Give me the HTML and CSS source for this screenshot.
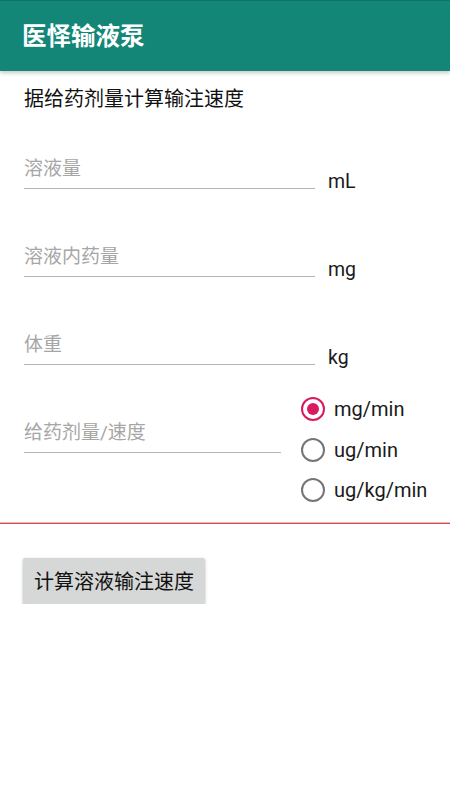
FILE: index.html
```html
<!DOCTYPE html>
<html lang="zh">
<head>
<meta charset="utf-8">
<title>医怿输液泵</title>
<link rel="stylesheet" href="styles.css">
</head>
<body>
<header class="appbar"><h1 class="title">医怿输液泵</h1></header>
<main class="content">
  <p class="subtitle">据给药剂量计算输注速度</p>
  <div class="row">
    <div class="field"><span class="hint">溶液量</span></div>
    <span class="unit">mL</span>
  </div>
  <div class="row">
    <div class="field"><span class="hint">溶液内药量</span></div>
    <span class="unit">mg</span>
  </div>
  <div class="row">
    <div class="field"><span class="hint">体重</span></div>
    <span class="unit">kg</span>
  </div>
  <div class="row row-dose">
    <div class="field field-dose"><span class="hint">给药剂量/速度</span></div>
    <div class="radios">
      <div class="radio-item"><span class="radio checked"></span><span class="radio-label">mg/min</span></div>
      <div class="radio-item"><span class="radio"></span><span class="radio-label">ug/min</span></div>
      <div class="radio-item"><span class="radio"></span><span class="radio-label">ug/kg/min</span></div>
    </div>
  </div>
  <div class="divider"></div>
  <button class="btn" type="button">计算溶液输注速度</button>
</main>
</body>
</html>
```
FILE: styles.css
```css
html, body {
  margin: 0;
  padding: 0;
  background: #ffffff;
}
body {
  font-family: Roboto, "Noto Sans CJK SC", sans-serif;
  color: #111;
  width: 450px;
}
.appbar {
  height: 71px;
  background: #138677;
  border-top: 1px solid #0f7568;
  box-sizing: border-box;
  box-shadow: 0 2px 4px rgba(0, 0, 0, 0.22);
  display: flex;
  align-items: center;
  padding-left: 22px;
  position: relative;
  z-index: 1;
}
.title {
  margin: 0;
  font-size: 24.5px;
  font-weight: bold;
  color: #ffffff;
  line-height: 30px;
  padding-top: 2px;
}
.content {
  padding: 0 0 0 24px;
}
.subtitle {
  margin: 16px 0 0 0;
  font-size: 20px;
  line-height: 24px;
  color: #111;
}
.row {
  display: flex;
  align-items: flex-start;
  margin-top: 56px;
}
.subtitle + .row {
  margin-top: 46px;
}
.field {
  flex: 0 0 291px;
  border-bottom: 1px solid #b4b4b4;
  padding-bottom: 7px;
}
.hint {
  display: block;
  font-size: 19px;
  line-height: 24px;
  color: #a6a6a6;
}
.unit {
  margin-left: 13px;
  margin-top: 13px;
  margin-bottom: -6px;
  font-size: 19.5px;
  line-height: 24px;
  color: #1a1a1a;
}
.row-dose {
  margin-top: 24px;
}
.field-dose {
  flex: 0 0 257px;
  margin-top: 32px;
}
.radios {
  margin-left: 20px;
  display: flex;
  flex-direction: column;
}
.radio-item {
  height: 40.5px;
  display: flex;
  align-items: center;
  gap: 9px;
}
.radio {
  width: 24px;
  height: 24px;
  box-sizing: border-box;
  border: 2px solid #757575;
  border-radius: 50%;
  display: flex;
  align-items: center;
  justify-content: center;
}
.radio.checked {
  border-color: #d81b60;
}
.radio.checked::after {
  content: "";
  width: 12px;
  height: 12px;
  border-radius: 50%;
  background: #d81b60;
}
.radio-label {
  font-size: 20px;
  line-height: 24px;
  color: #1a1a1a;
}
.divider {
  margin: 11px 0 0 -24px;
  height: 1px;
  background: #dc4c4c;
  border-top: 1px solid #eeb3b3;
}
.btn {
  display: block;
  margin: 34px 0 0 -1px;
  width: 182px;
  height: 46px;
  border: none;
  border-radius: 2px;
  background: #d6d7d7;
  box-shadow: 0 1px 3px rgba(0, 0, 0, 0.28);
  font-family: Roboto, "Noto Sans CJK SC", sans-serif;
  font-size: 20px;
  color: #111;
  padding: 0;
}
```
